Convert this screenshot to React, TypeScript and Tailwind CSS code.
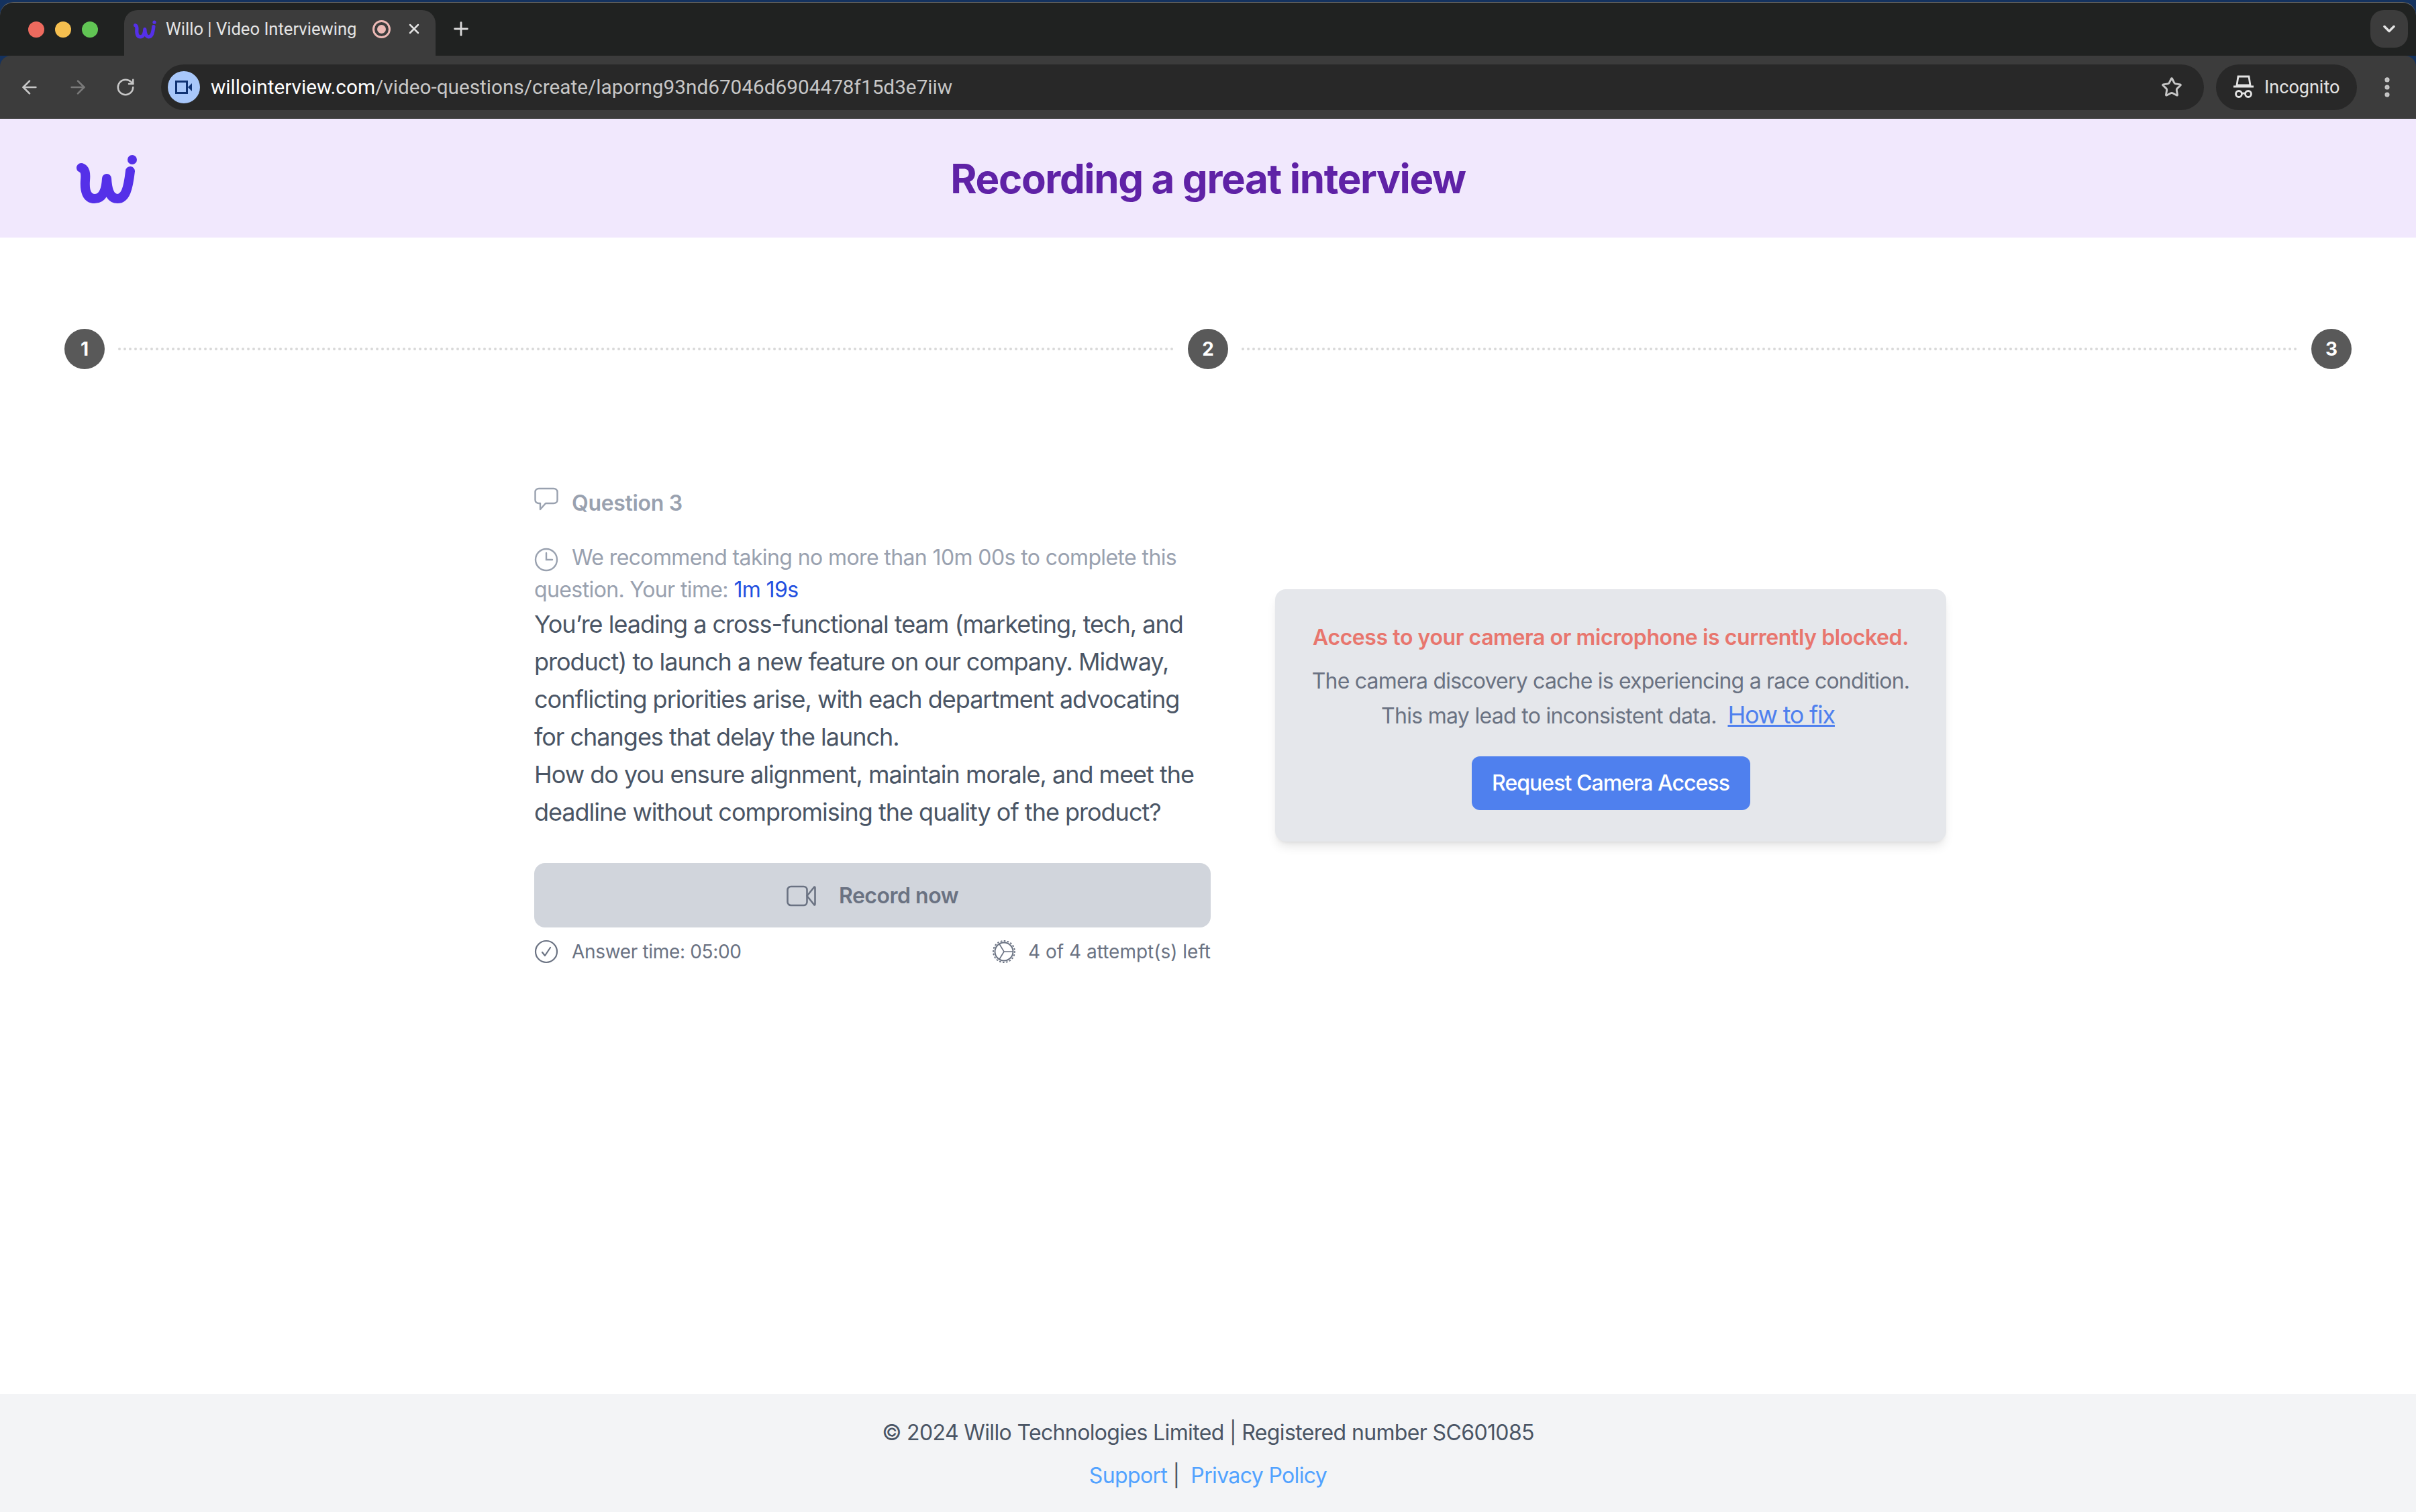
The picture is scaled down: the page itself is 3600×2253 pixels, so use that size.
import React from "react";
import { ArrowLeft, ArrowRight, ChevronDown, EllipsisVertical, Plus, RotateCw, Star, X } from "lucide-react";

// Willo logo, also used (smaller) as the tab favicon
const WilloLogo = ({ className }: { className: string }) => (
  <svg viewBox="0 0 91 72" className={className} fill="none" stroke="currentColor" strokeWidth="14" strokeLinecap="round" strokeLinejoin="round">
    <path d="M7 19C13 21 14 27 13 38C12 53 15 65 27 65C38 65 44 54 45 35C46 52 50 65 61 65C73 65 77 50 80 24" />
    <circle cx="83" cy="7" r="7" fill="currentColor" stroke="none" />
  </svg>
);

const Step = ({ n }: { n: number }) => (
  <div className="flex h-[60px] w-[60px] shrink-0 items-center justify-center rounded-full bg-[#595959] text-[28px] font-bold text-white">
    {n}
  </div>
);

const StepLine = () => <div className="mx-[20px] flex-1 border-t-[4px] border-dotted border-[#d8d8d8]" />;

const BubbleIcon = () => (
  <svg viewBox="0 0 36 44" className="mr-[20px] h-[44px] w-[36px] shrink-0 -translate-y-[3px] text-gray-400" fill="none" stroke="currentColor" strokeWidth="2.4" strokeLinejoin="round">
    <path d="M7 3H29C32 3 34.500 5 34.500 8V20C34.500 23 32 25 29 25H17L9 34V25H7C4 25 1.500 23 1.500 20V8C1.500 5 4 3 7 3Z" />
  </svg>
);

const ClockIcon = () => (
  <svg viewBox="0 0 36 36" className="mr-[20px] inline-block h-[36px] w-[36px] align-[-10px] text-gray-400" fill="none" stroke="currentColor" strokeWidth="2.400" strokeLinecap="round">
    <circle cx="18" cy="18" r="16" />
    <path d="M18 8V18H27" />
  </svg>
);

const CameraIcon = () => (
  <svg viewBox="0 0 44 32" className="mr-[34px] h-[32px] w-[44px] text-gray-500" fill="none" stroke="currentColor" strokeWidth="2.600" strokeLinejoin="round">
    <rect x="1.500" y="2" width="29" height="28" rx="5" />
    <path d="M30.500 16L41 3C42 2 42.500 3 42.500 4V28C42.500 29 42 30 41 29L30.500 16Z" />
  </svg>
);

const CheckIcon = () => (
  <svg viewBox="0 0 36 36" className="mr-[20px] h-[36px] w-[36px] text-gray-500" fill="none" stroke="currentColor" strokeWidth="2.200" strokeLinecap="round" strokeLinejoin="round">
    <circle cx="18" cy="18" r="16" />
    <path d="M12 19L16 24L24 12" />
  </svg>
);

const GearIcon = () => (
  <svg viewBox="0 0 36 36" className="mr-[18px] h-[36px] w-[36px] text-gray-500" fill="none" stroke="currentColor" strokeLinecap="round">
    <circle cx="18" cy="18" r="13.500" strokeWidth="2" />
    <circle cx="18" cy="18" r="16" strokeWidth="2" strokeDasharray="1 4.030" />
    <path d="M11 6.500L18 18H31.500M18 18L11 29.500" strokeWidth="1.600" />
  </svg>
);

const IncognitoIcon = () => (
  <svg viewBox="0 0 30 38" className="mr-[16px] h-[38px] w-[30px] text-[#e3e3e3]" fill="none" stroke="currentColor" strokeWidth="2.800">
    <path d="M7 3H23L25 16H5L7 3Z" fill="none" />
    <path d="M0 18H30" strokeWidth="3" />
    <circle cx="8" cy="29" r="4.500" />
    <circle cx="22" cy="29" r="4.500" />
    <path d="M12 28H18" />
  </svg>
);

const BrowserChrome = () => (
  <div className="bg-[#14325f] pt-[3px] font-['Roboto',sans-serif]">
    {/* tab strip */}
    <div className="flex h-[80px] items-start rounded-t-[20px] border-t border-[#6b6b6b] bg-[#202221] pt-[11px]">
      <div className="flex h-[58px] w-[185px] shrink-0 items-center gap-[16px] pl-[42px]">
        <span className="h-[24px] w-[24px] rounded-full bg-[#ed6a5e]" />
        <span className="h-[24px] w-[24px] rounded-full bg-[#f5bf4f]" />
        <span className="h-[24px] w-[24px] rounded-full bg-[#61c554]" />
      </div>
      <div className="flex h-[68px] w-[464px] shrink-0 items-start rounded-t-[20px] bg-[#3c3c3c] pl-[14px] pt-[14px]">
        <WilloLogo className="h-[30px] w-[34px] text-[#5530e8]" />
        <span className="ml-[14px] -mt-[2px] text-[25.600px] leading-[32px] whitespace-nowrap text-[#e3e3e3]">Willo | Video Interviewing</span>
        <span className="ml-[24px] mt-[1px] flex h-[27px] w-[27px] shrink-0 items-center justify-center rounded-full border-[3px] border-[#ecb9b5]">
          <span className="h-[13px] w-[13px] rounded-full bg-[#ecb9b5]" />
        </span>
        <X className="ml-[23px] mt-[2px] h-[24px] w-[24px] shrink-0 text-[#e3e3e3]" strokeWidth={2.500} />
      </div>
      <Plus className="ml-[22px] mt-[12px] h-[32px] w-[32px] text-[#d8d8d8]" strokeWidth={2.200} />
      <div className="ml-auto mr-[12px] flex h-[56px] w-[56px] items-center justify-center rounded-[20px] bg-[#3c3c3c]">
        <ChevronDown className="h-[28px] w-[28px] text-[#e3e3e3]" strokeWidth={3} />
      </div>
    </div>
    {/* toolbar */}
    <div className="flex h-[94px] items-center rounded-t-[16px] bg-[#3c3c3c]">
      <div className="flex w-[240px] shrink-0 items-center gap-[40px] pl-[28px]">
        <ArrowLeft className="h-[32px] w-[32px] text-[#c7c7c7]" strokeWidth={2} />
        <ArrowRight className="h-[32px] w-[32px] text-[#7a7a7a]" strokeWidth={2} />
        <RotateCw className="h-[30px] w-[30px] text-[#c7c7c7]" strokeWidth={2} />
      </div>
      <div className="flex h-[68px] w-[3044px] items-center rounded-full bg-[#282828] pl-[10px]">
        <div className="flex h-[48px] w-[48px] items-center justify-center rounded-full bg-[#a8c7fa]">
          <svg viewBox="0 0 26 20" className="h-[20px] w-[26px] text-[#0f3273]" fill="none" stroke="currentColor" strokeWidth="3">
            <rect x="1.500" y="1.500" width="16" height="17" />
            <path d="M19 10L25 4V16L19 10Z" fill="currentColor" stroke="none" />
          </svg>
        </div>
        <span className="ml-[16px] text-[29.750px] text-[#c7c7c7]">
          <span className="text-white">willointerview.com</span>/video-questions/create/laporng93nd67046d6904478f15d3e7iiw
        </span>
        <Star className="ml-auto mr-[32px] h-[32px] w-[32px] text-[#c7c7c7]" strokeWidth={2.200} />
      </div>
      <div className="ml-[18px] flex h-[68px] w-[210px] items-center rounded-full bg-[#282828] pl-[26px]">
        <IncognitoIcon />
        <span className="text-[27px] text-[#e3e3e3]">Incognito</span>
      </div>
      <EllipsisVertical className="ml-[26px] h-[38px] w-[38px] text-[#c7c7c7]" strokeWidth={2.500} />
    </div>
  </div>
);

export default function App() {
  return (
    <div className="flex h-[2253px] w-[3600px] flex-col overflow-hidden bg-white font-['Inter',sans-serif]">
      <BrowserChrome />

      {/* purple page header */}
      <div className="relative flex h-[177px] items-center justify-center bg-[#f1e8fd]">
        <WilloLogo className="absolute left-[114px] top-[54px] h-[72px] w-[91px] text-[#5530e8]" />
        <h1 className="text-[60px] leading-[72px] font-bold tracking-[-0.023em] text-[#5f22a6]">Recording a great interview</h1>
      </div>

      {/* stepper */}
      <div className="flex items-center px-[96px] pt-[136px]">
        <Step n={1} />
        <StepLine />
        <Step n={2} />
        <StepLine />
        <Step n={3} />
      </div>

      {/* question + camera card */}
      <div className="ml-[796px] mt-[175px] flex flex-1 items-start gap-[96px]">
        <div className="w-[1008px] shrink-0">
          <div className="flex h-[48px] translate-y-[1px] items-center text-[32px] font-semibold tracking-[-0.01em] text-gray-400">
            <BubbleIcon />
            Question 3
          </div>
          <p className="mt-[34px] text-[32px] leading-[48px] tracking-[-0.019em] text-gray-400">
            <ClockIcon />
            We recommend taking no more than 10m 00s to complete this question. Your time: <span className="text-[#2350e0]">1m 19s</span>
          </p>
          <p className="-mt-[1px] text-[36px] leading-[56px] tracking-[-0.028em] text-gray-600">
            You’re leading a cross-functional team (marketing, tech, and product) to launch a new feature on our company. Midway, conflicting priorities arise, with each department advocating for changes that delay the launch.
            <br />
            How do you ensure alignment, maintain morale, and meet the deadline without compromising the quality of the product?
          </p>
          <button className="mt-[48px] flex h-[96px] w-full items-center justify-center rounded-[16px] bg-gray-300 pt-[1px] text-[32px] font-semibold tracking-[-0.015em] text-gray-500">
            <CameraIcon />
            Record now
          </button>
          <div className="mt-[16px] flex h-[40px] items-center text-[28px] tracking-[-0.012em] text-gray-500">
            <CheckIcon />
            Answer time: 05:00
            <div className="ml-auto flex items-center tracking-normal">
              <GearIcon />4 of 4 attempt(s) left
            </div>
          </div>
        </div>

        <div className="mt-[153px] flex h-[376px] w-[1000px] flex-col items-center rounded-[16px] bg-gray-200 pt-[48px] shadow-lg">
          <p className="text-[32px] leading-[48px] font-semibold tracking-[-0.013em] text-[#e8766e]">Access to your camera or microphone is currently blocked.</p>
          <p className="mt-[15px] text-center text-[32px] leading-[51px] tracking-[-0.025em] text-gray-500">
            The camera discovery cache is experiencing a race condition.
            <br />
            <span className="tracking-[-0.022em]">This may lead to inconsistent data.&nbsp; </span>
            <a className="mr-[8px] text-[36px] tracking-[-0.035em] text-[#4f80ee] underline">How to fix</a>
          </p>
          <button className="mt-[35px] flex h-[80px] w-[415px] items-center justify-center rounded-[12px] bg-[#4f80ee] text-[32px] font-medium tracking-[-0.03em] text-white">
            Request Camera Access
          </button>
        </div>
      </div>

      {/* footer */}
      <div className="flex h-[176px] shrink-0 flex-col items-center bg-gray-100 pt-[34px] text-[32px] leading-[48px] tracking-[-0.02em] text-gray-600">
        <p>© 2024 Willo Technologies Limited | Registered number SC601085</p>
        <p className="mt-[16px]">
          <a className="text-blue-400">Support</a> |&nbsp; <a className="text-blue-400">Privacy Policy</a>
        </p>
      </div>
    </div>
  );
}
